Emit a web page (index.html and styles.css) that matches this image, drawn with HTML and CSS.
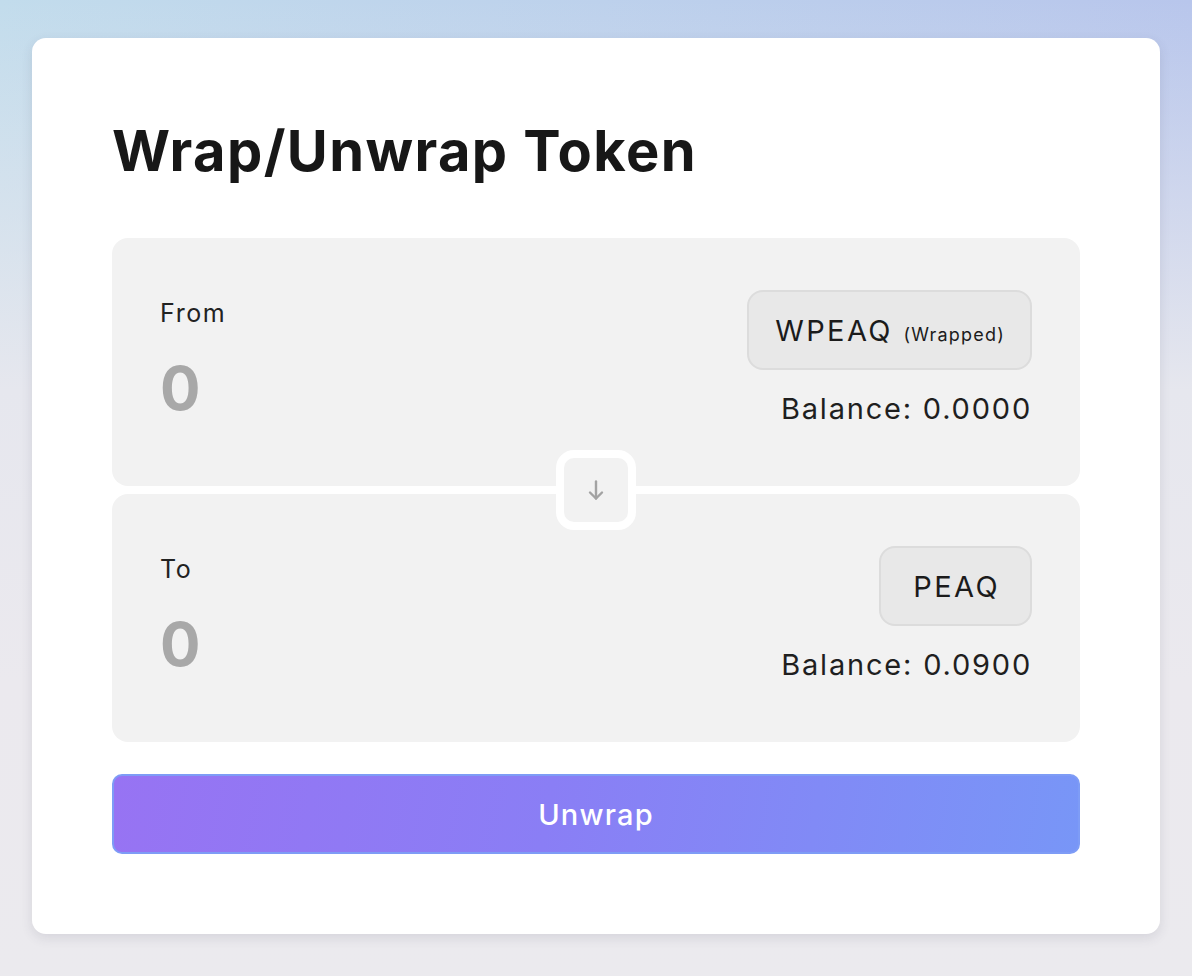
FILE: index.html
```html
<!DOCTYPE html>
<html lang="en">
<head>
    <meta charset="UTF-8">
    <meta name="viewport" content="width=device-width, initial-scale=1.0">
    <title>Wrap/Unwrap Token</title>
    <link rel="stylesheet" href="styles.css">
</head>
<body>
    <div class="card">
        <h1 class="card__title">Wrap/Unwrap Token</h1>

        <div class="swap">
            <div class="swap__panel">
                <div class="swap__side">
                    <div class="swap__label">From</div>
                    <div class="swap__amount">0</div>
                </div>
                <div class="swap__side swap__side--right">
                    <button class="token">WPEAQ <small>(Wrapped)</small></button>
                    <div class="swap__balance">Balance: 0.0000</div>
                </div>
            </div>

            <div class="swap__panel">
                <div class="swap__side">
                    <div class="swap__label">To</div>
                    <div class="swap__amount">0</div>
                </div>
                <div class="swap__side swap__side--right">
                    <button class="token token--short">PEAQ</button>
                    <div class="swap__balance">Balance: 0.0900</div>
                </div>
            </div>

            <button class="swap__flip" aria-label="Switch">
                <svg width="24" height="24" viewBox="0 0 24 24" fill="none" stroke="#a3a3a3" stroke-width="2.4" stroke-linecap="round" stroke-linejoin="round">
                    <path d="M12 3.5v17"/>
                    <path d="M6 14.5l6 6 6-6"/>
                </svg>
            </button>
        </div>

        <button class="action">Unwrap</button>
    </div>
</body>
</html>
```

FILE: styles.css
```css
* {
    box-sizing: border-box;
    margin: 0;
    padding: 0;
}

body {
    min-height: 100vh;
    padding: 38px 32px 42px;
    font-family: 'Inter', 'Noto Sans', sans-serif;
    color: #1b1b1b;
    background:
        linear-gradient(to bottom, rgba(235, 233, 238, 0) 0%, #e6e7ee 40%, #ebe9ee 70%, #ebeaee 100%),
        linear-gradient(90deg, #c2dcec 0%, #bccfec 60%, #b8c6ec 100%);
}

.card {
    background-color: #fff;
    border-radius: 14px;
    box-shadow: 0 4px 12px rgba(60, 60, 80, 0.12);
    padding: 80px 80px 80px;
}

.card__title {
    font-size: 56px;
    font-weight: 700;
    line-height: 67px;
    letter-spacing: 1.4px;
    color: #171717;
    margin-bottom: 53px;
}

.swap {
    position: relative;
    display: flex;
    flex-direction: column;
    gap: 8px;
}

.swap__panel {
    height: 248px;
    background-color: #f2f2f2;
    border-radius: 16px;
    padding: 52px 48px 0;
    display: flex;
    justify-content: space-between;
    align-items: flex-start;
}

.swap__side {
    display: flex;
    flex-direction: column;
    padding-top: 8px;
}

.swap__side--right {
    align-items: flex-end;
    gap: 21px;
    padding-top: 0;
}

.swap__label {
    font-size: 25px;
    line-height: 30px;
    letter-spacing: 1.6px;
    color: #222;
}

.swap__amount {
    font-size: 60px;
    font-weight: 700;
    line-height: 72px;
    color: #a8a8a8;
    margin-top: 24px;
}

.swap__balance {
    font-size: 29px;
    line-height: 36px;
    letter-spacing: 1.8px;
    color: #1f1f1f;
}

.token {
    height: 80px;
    padding: 0 25px 0 26px;
    font-family: inherit;
    font-size: 29px;
    letter-spacing: 2.4px;
    color: #1b1b1b;
    background-color: #e8e8e8;
    border: 2px solid #dcdcdc;
    border-radius: 16px;
    cursor: pointer;
}

.token--short {
    padding: 0 30px 0 32px;
}

.token small {
    font-size: 18px;
    letter-spacing: 1.2px;
    margin-left: 0;
}

.swap__flip {
    position: absolute;
    left: 50%;
    top: 212px;
    width: 80px;
    height: 80px;
    margin-left: -40px;
    display: flex;
    align-items: center;
    justify-content: center;
    background-color: #f2f2f2;
    border: 8px solid #fff;
    border-radius: 18px;
    cursor: pointer;
}

.action {
    display: block;
    width: 100%;
    height: 80px;
    margin-top: 32px;
    font-family: inherit;
    font-size: 29px;
    font-weight: 500;
    letter-spacing: 1.2px;
    color: #fff;
    background: linear-gradient(100deg, #9773f3 0%, #8a7ef5 45%, #7896f7 100%);
    border: 2px solid #7e9cf6;
    border-radius: 10px;
    cursor: pointer;
}
```
